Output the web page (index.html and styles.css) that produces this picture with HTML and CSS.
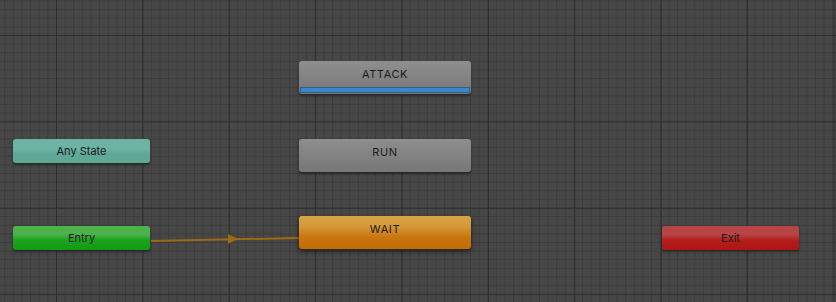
FILE: index.html
```html
<html>
<head>
<meta charset="utf-8" />
<title>Animator</title>
<link rel="stylesheet" href="styles.css">
</head>
<body>
<div class="graph">
	<svg class="links" width="836" height="302">
		<line x1="151" y1="241" x2="299" y2="238" stroke="#9b6a12" stroke-width="2"/>
		<polygon points="228,234 238,239 228,244" fill="#9b6a12"/>
	</svg>

	<div class="node big gray attack">
		<span>ATTACK</span>
		<div class="progress"></div>
	</div>
	<div class="node big gray run"><span>RUN</span></div>
	<div class="node big orange wait"><span>WAIT</span></div>

	<div class="node small teal any"><span>Any State</span></div>
	<div class="node small green entry"><span>Entry</span></div>
	<div class="node small red exit"><span>Exit</span></div>
</div>
</body>
</html>
```

FILE: styles.css
```css
body {
	margin: 0;
	background-color: #474747;
	font-family: Inter, "DejaVu Sans", sans-serif;
	overflow: hidden;
}

.graph {
	position: relative;
	width: 836px;
	height: 302px;
	background-color: #474747;
	background-image:
		linear-gradient(to right, #2e2e2e 1px, transparent 1px),
		linear-gradient(to bottom, #2e2e2e 1px, transparent 1px),
		linear-gradient(to right, #3c3c3c 1px, transparent 1px),
		linear-gradient(to bottom, #3c3c3c 1px, transparent 1px);
	background-size: 86.4px 86.4px, 86.4px 86.4px, 8.64px 8.64px, 8.64px 8.64px;
	background-position: 56px 35px, 56px 35px, 56px 35px, 56px 35px;
}

.links {
	position: absolute;
	left: 0;
	top: 0;
}

.node {
	position: absolute;
	box-sizing: border-box;
	border-radius: 3px;
	color: #1a1a1a;
	font-size: 11px;
	text-align: center;
	box-shadow: 0 1px 0 #2a2a2a, 0 2px 3px rgba(0,0,0,0.35);
}

.node span {
	display: block;
}

.big {
	width: 172px;
	height: 33px;
	left: 299px;
	letter-spacing: 0.6px;
}

.big span {
	padding-top: 6px;
}

.small {
	width: 137px;
	height: 24px;
}

.small span {
	line-height: 24px;
}

.gray {
	background: linear-gradient(to bottom, #8e8e8e, #777777);
}

.orange {
	background: linear-gradient(to bottom, #d9a448 0%, #d59a38 30%, #c9760e 65%, #c46a08 100%);
	box-shadow: 0 1px 0 #2a2a2a, 0 2px 5px rgba(0,0,0,0.6);
}

.teal {
	background: linear-gradient(to bottom, #6cb3a3 0%, #6cb3a3 45%, #5fa896 60%, #5fa896 100%);
}

.green {
	background: linear-gradient(to bottom, #4db24d 0%, #4db24d 35%, #1aa21a 60%, #139c13 100%);
}

.red {
	background: linear-gradient(to bottom, #b84545 0%, #b84545 35%, #b31d1d 60%, #b01414 100%);
}

.attack {
	top: 61px;
}

.run {
	top: 139px;
}

.wait {
	top: 216px;
}

.progress {
	position: absolute;
	left: 1px;
	right: 1px;
	bottom: 1px;
	height: 6px;
	background-color: #3a88c9;
	border: 1px solid #2f5f88;
	box-sizing: border-box;
}

.any {
	left: 13px;
	top: 139px;
}

.entry {
	left: 13px;
	top: 226px;
}

.exit {
	left: 662px;
	top: 226px;
}
```
